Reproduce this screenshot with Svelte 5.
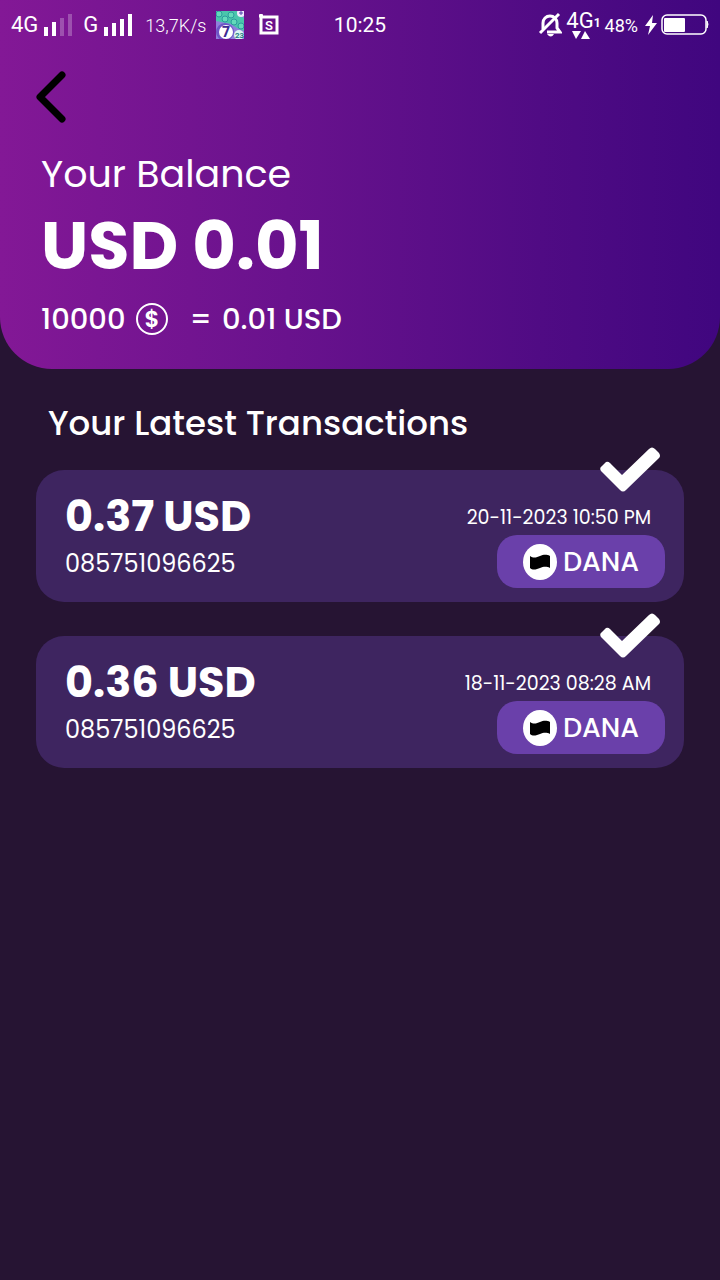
<script>
	let balance = "0.01";
	let coins = 10000;
	let transactions = [
		{ amount: "0.37 USD", phone: "085751096625", date: "20-11-2023 10:50 PM" },
		{ amount: "0.36 USD", phone: "085751096625", date: "18-11-2023 08:28 AM" }
	];
</script>

<main>
	<header>
		<div class="status">
			<div class="group left">
				<span class="net">4G</span>
				<svg class="signal" width="30" height="24" viewBox="0 0 30 24" fill="#fff">
					<path d="M1 14h4v9H1zM9 9h4v14H9z" />
					<path d="M17 5h4v18h-4zM25 1h4v22h-4z" opacity=".25" />
				</svg>
				<span class="net second">G</span>
				<svg class="signal" width="30" height="24" viewBox="0 0 30 24" fill="#fff">
					<path d="M1 14h4v9H1zM9 10h4v13H9zM17 6h4v17h-4zM25 1h4v22h-4z" />
				</svg>
				<span class="speed">13,7K/s</span>
				<svg class="app" width="28" height="28" viewBox="0 0 28 28">
					<rect width="28" height="28" fill="#8f80dc" />
					<path d="M0 0h22l3 5 3 2v13l-7-3-6-4-15-3z" fill="#4ac5ac" />
					<g fill="#63dabb" stroke="#2c9b9d">
						<circle cx="3" cy="3" r="3" />
						<circle cx="15" cy="4" r="3" />
						<circle cx="9" cy="8" r="3" />
						<circle cx="18" cy="11" r="3" />
						<circle cx="25" cy="15" r="3" />
					</g>
					<circle cx="25" cy="2" r="4" fill="#eee9ff" />
					<path d="M23 2h4M25 0v4" stroke="#5342ae" />
					<circle cx="9" cy="21" r="9" fill="#6e55c6" />
					<circle cx="10" cy="21" r="7" fill="#fff" />
					<text x="6" y="26" font-size="14" font-weight="800" fill="#3d2b94">7</text>
					<circle cx="23" cy="24" r="5" fill="#d9f5f2" />
					<text x="19" y="27" font-size="8" font-weight="700" fill="#287e86">23</text>
				</svg>
				<svg class="boxed" width="22" height="24" viewBox="0 0 22 24">
					<path d="M3 4h16v16H3zM1 3h4M3 1v4" fill="none" stroke="#fff" stroke-width="3" />
					<text x="11" y="17" font-size="13" font-weight="600" text-anchor="middle" fill="#fff">S</text>
				</svg>
			</div>
			<time>10:25</time>
			<div class="group right">
				<svg width="24" height="26" viewBox="0 0 24 26" fill="none" stroke="#fff">
					<path d="M5 17V11c0-4 3-7 7-7s7 3 7 7v5l3 4H9" stroke-width="3" />
					<path d="M21 2L2 21" stroke-width="3" />
					<path d="M9 22h7q-3 5-7 0z" fill="#fff" stroke="none" />
				</svg>
				<div class="data">
					<span class="net">4G</span><small>1</small>
					<svg width="18" height="8" viewBox="0 0 18 8" fill="#fff">
						<path d="M0 0h9L4 8zM9 8h9l-5-8z" />
					</svg>
				</div>
				<span class="percent">48%</span>
				<svg class="bolt" width="14" height="22" viewBox="0 0 14 22" fill="#fff">
					<path d="M9 1L1 12h5L4 21l9-12H8z" />
				</svg>
				<svg width="48" height="22" viewBox="0 0 48 22">
					<rect x="1" y="1" width="44" height="19" rx="5" fill="none" stroke="#fff" stroke-width="1.5" />
					<rect x="3" y="4" width="21" height="14" rx="1" fill="#fff" />
					<path d="M46 7q2 3 0 7z" fill="#fff" stroke="#fff" />
				</svg>
			</div>
		</div>

		<button class="back" aria-label="Back">
			<svg width="30" height="52" viewBox="0 0 30 52" fill="none" stroke="#000" stroke-width="7" stroke-linecap="round" stroke-linejoin="round">
				<path d="M26 4L4 26l22 22" />
			</svg>
		</button>

		<div class="balance">
			<p class="label">Your Balance</p>
			<h1>USD {balance}</h1>
			<p class="rate">
				<span>{coins}</span>
				<svg width="32" height="32" viewBox="0 0 32 32" aria-hidden="true">
					<circle cx="16" cy="16" r="15" fill="none" stroke="#fff" stroke-width="2" />
					<text x="16" y="24" font-size="23" font-weight="600" text-anchor="middle" fill="#fff">$</text>
				</svg>
				<span class="equals">=</span>
				<span>{balance} USD</span>
			</p>
		</div>
	</header>

	<section>
		<h2>Your Latest Transactions</h2>
		<ul>
			{#each transactions as item}
				<li>
					<svg class="check" width="60" height="46" viewBox="0 0 60 46">
						<path d="M2 19l4-4q2-1 4 1l12 12L49 2q3-3 6 0l4 4q2 3 0 5L26 43q-3 3-6 0L1 24q-2-3 1-5z" fill="#fff" />
					</svg>
					<div>
						<h3>{item.amount}</h3>
						<p class="phone">{item.phone}</p>
					</div>
					<div class="side">
						<time class="date">{item.date}</time>
						<div class="dana">
							<svg width="34" height="36" viewBox="0 0 34 36">
								<ellipse cx="17" cy="18" rx="17" ry="18" fill="#fff" />
								<path d="M7 12c4 3 7 1 10 0s6-2 10 0v12c-4-2-7-1-10 0s-7 3-10 0z" fill="#000" />
							</svg>
							<span>DANA</span>
						</div>
					</div>
				</li>
			{/each}
		</ul>
	</section>
</main>

<style>
	:global(body) {
		background: #261433;
	}
	main {
		min-height: 100vh;
		background: #261433;
		color: #fff;
		font-family: Poppins, Inter, sans-serif;
	}
	h1, h2, h3, p, ul {
		margin: 0;
		padding: 0;
	}
	svg {
		display: block;
		flex: none;
	}
	header {
		background: linear-gradient(90deg, #831896, #69128d 40%, #500b84 75%, #40067f);
		border-radius: 0 0 52px 52px;
		padding-bottom: 34px;
	}
	.status {
		display: grid;
		grid-template-columns: 1fr auto 1fr;
		align-items: center;
		height: 50px;
		padding: 0 11px;
		font-family: Roboto, sans-serif;
	}
	.status > time {
		font-size: 21px;
	}
	.group {
		display: flex;
		align-items: center;
	}
	.right {
		justify-content: flex-end;
	}
	.net {
		font-size: 22px;
		line-height: 24px;
	}
	.signal {
		margin-left: 5px;
	}
	.second {
		margin-left: 10px;
	}
	.speed {
		margin-left: 12px;
		font-size: 18px;
		font-weight: 300;
	}
	.app {
		margin-left: 10px;
	}
	.boxed {
		margin-left: 14px;
	}
	.data {
		display: grid;
		grid-template-columns: auto auto;
		align-items: end;
		margin: 0 4px 0 4px;
	}
	.data .net {
		line-height: 20px;
	}
	.data small {
		font-size: 12px;
		line-height: 16px;
		font-weight: 700;
	}
	.data svg {
		margin-left: 6px;
	}
	.percent {
		font-size: 18px;
	}
	.bolt {
		margin: 0 3px 0 6px;
	}
	.back {
		display: block;
		margin: 21px 0 0 36px;
		padding: 0;
		border: 0;
		background: none;
	}
	.balance {
		padding: 27px 41px 0;
	}
	.label {
		font-size: 38px;
		line-height: 48px;
	}
	h1 {
		margin-top: 4px;
		font-size: 67px;
		line-height: 88px;
		font-weight: 700;
	}
	.rate {
		display: flex;
		align-items: center;
		gap: 10px;
		margin-top: 13px;
		font-size: 29px;
		line-height: 32px;
		font-weight: 500;
	}
	.equals {
		margin-left: 12px;
	}
	section {
		padding: 30px 36px;
	}
	h2 {
		padding-left: 12px;
		font-size: 34px;
		line-height: 48px;
		font-weight: 500;
	}
	ul {
		display: flex;
		flex-direction: column;
		gap: 34px;
		margin-top: 23px;
		list-style: none;
	}
	li {
		position: relative;
		display: flex;
		justify-content: space-between;
		padding: 20px 19px 14px 29px;
		border-radius: 28px;
		background: #3e2560;
	}
	.check {
		position: absolute;
		top: -23px;
		right: 24px;
	}
	h3 {
		font-size: 43px;
		line-height: 52px;
		font-weight: 700;
	}
	.phone {
		margin-top: 4px;
		font-size: 24px;
		line-height: 36px;
	}
	.side {
		display: flex;
		flex-direction: column;
		align-items: flex-end;
	}
	.date {
		margin: 14px 14px 4px 0;
		font-size: 19px;
		line-height: 27px;
	}
	.dana {
		display: flex;
		align-items: center;
		justify-content: center;
		gap: 6px;
		width: 168px;
		height: 53px;
		border-radius: 20px;
		background: #6a40aa;
		font-size: 27px;
		font-weight: 500;
	}
</style>
